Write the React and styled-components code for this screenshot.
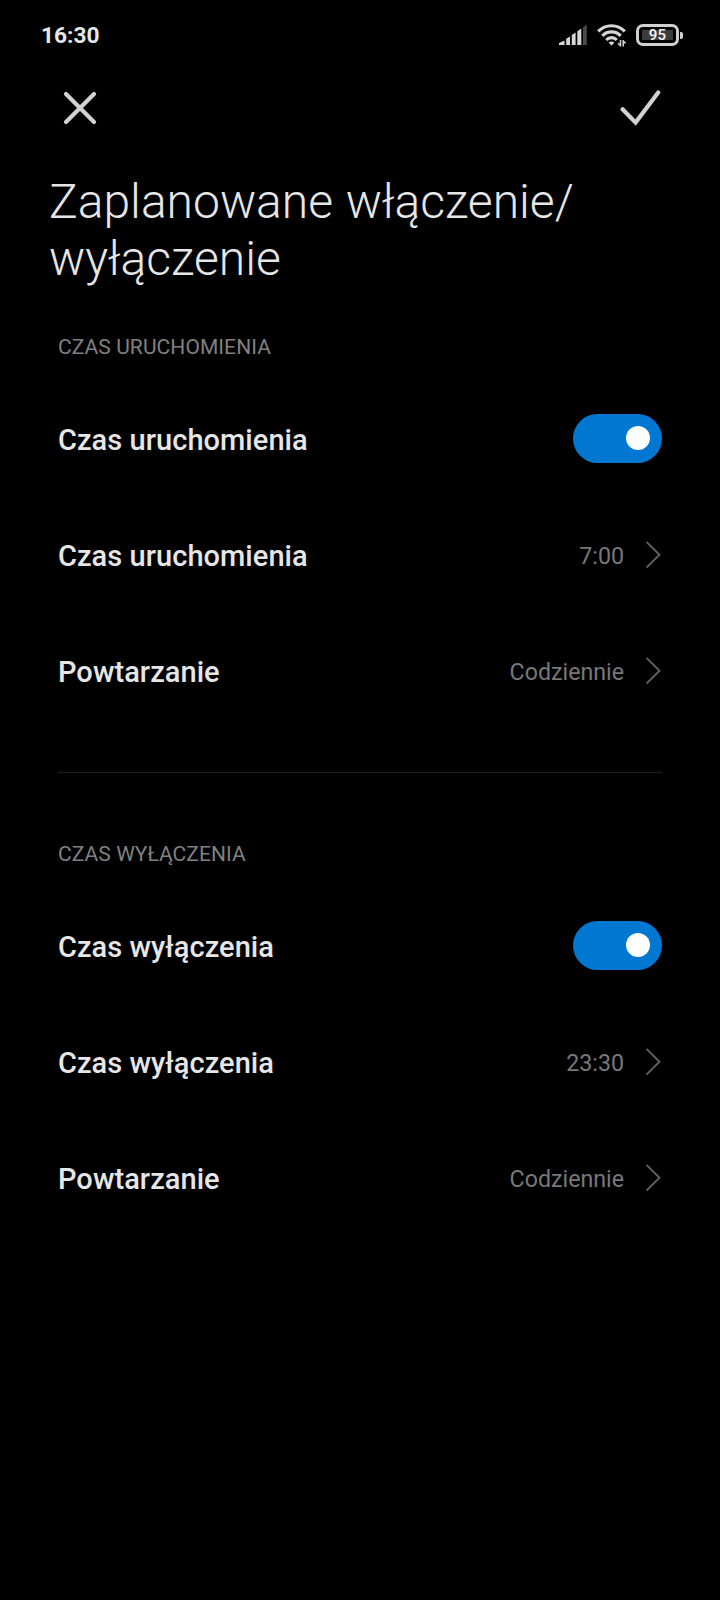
import React from 'react';
import styled, { createGlobalStyle } from 'styled-components';

export default function App() {
  return (
    <Screen>
      <GlobalStyle />
      <StatusBar>
        <Clock>16:30</Clock>
        <StatusIcons>
          <SignalIcon />
          <WifiIcon />
          <Battery level={95} />
        </StatusIcons>
      </StatusBar>
      <ActionBar>
        <IconButton aria-label="Anuluj">
          <CloseIcon />
        </IconButton>
        <IconButton aria-label="Zapisz">
          <CheckIcon />
        </IconButton>
      </ActionBar>
      <Title>
        Zaplanowane włączenie/
        <br />
        wyłączenie
      </Title>
      <Section>
        <SectionTitle>CZAS URUCHOMIENIA</SectionTitle>
        <ToggleRow label="Czas uruchomienia" />
        <LinkRow label="Czas uruchomienia" value="7:00" />
        <LinkRow label="Powtarzanie" value="Codziennie" />
      </Section>
      <Divider />
      <Section>
        <SectionTitle>CZAS WYŁĄCZENIA</SectionTitle>
        <ToggleRow label="Czas wyłączenia" />
        <LinkRow label="Czas wyłączenia" value="23:30" />
        <LinkRow label="Powtarzanie" value="Codziennie" />
      </Section>
    </Screen>
  );
}

function ToggleRow({ label }) {
  const [on, setOn] = React.useState(true);

  return (
    <Row>
      <RowLabel>{label}</RowLabel>
      <Switch role="switch" aria-checked={on} aria-label={label} $on={on} onClick={() => setOn(!on)}>
        <Knob />
      </Switch>
    </Row>
  );
}

function LinkRow({ label, value }) {
  return (
    <Row>
      <RowLabel>{label}</RowLabel>
      <RowValue>{value}</RowValue>
      <Chevron />
    </Row>
  );
}

function Battery({ level }) {
  return (
    <BatteryWrapper>
      <BatteryBody>
        <BatteryFill>{level}</BatteryFill>
      </BatteryBody>
      <BatteryTip />
    </BatteryWrapper>
  );
}

function SignalIcon() {
  return (
    <svg width="28" height="22" viewBox="0 0 28 22" fill="#d6d6d6">
      <path d="M0 21V19L5.5 16.5V21Z" />
      <path d="M7.2 21V14.8L11 12.5V21Z" />
      <path d="M12.8 21V11L16.6 8.5V21Z" />
      <path d="M18.3 21V7.3L22.3 4.6V21Z" />
      <path d="M24 21V3.2L27.8 0.8V21Z" fill="#4a4a4a" />
    </svg>
  );
}

function WifiIcon() {
  return (
    <svg width="30" height="24" viewBox="0 0 30 24" fill="none" stroke="#d6d6d6" strokeWidth="3.1">
      <path d="M1.2 8.4C8.6 0.8 20.4 0.8 27.8 8.4" />
      <path d="M5.3 12.8C10.4 7.6 18.6 7.6 23.7 12.8" />
      <path d="M9.2 17C12.3 13.8 16.7 13.8 19.8 17" />
      <path d="M14.5 22.6L11.6 19.8C13.3 18.2 15.7 18.2 17.4 19.8Z" fill="#d6d6d6" stroke="none" />
      <path d="M23.5 17V23.6M23.6 22.6L21 20.2M26.2 17V23.4M26.1 18L28.6 20.4" strokeWidth="1.5" />
    </svg>
  );
}

function CloseIcon() {
  return (
    <svg width="34" height="34" viewBox="0 0 34 34" fill="none" stroke="#d2d2d2" strokeWidth="4.2" strokeLinecap="round">
      <path d="M3 3L31 31M31 3L3 31" />
    </svg>
  );
}

function CheckIcon() {
  return (
    <svg width="42" height="36" viewBox="0 0 42 36" fill="none" stroke="#d2d2d2" strokeWidth="4.2" strokeLinecap="round">
      <path d="M2.6 19.2L15.6 32.6L38.2 2.4" />
    </svg>
  );
}

function Chevron() {
  return (
    <svg width="16" height="30" viewBox="0 0 16 30" fill="none" stroke="#606060" strokeWidth="1.9">
      <path d="M0.5 3L13.5 15.8L0.5 28.6" />
    </svg>
  );
}

const GlobalStyle = createGlobalStyle`
  body {
    margin: 0;
    background-color: #000;
  }
`;

const Screen = styled.div`
  display: flex;
  flex-direction: column;
  width: 720px;
  height: 1600px;
  overflow: hidden;
  background-color: #000;
  color: #e6e6e6;
  font-family: Roboto, 'Liberation Sans', sans-serif;
`;

const StatusBar = styled.div`
  display: flex;
  align-items: center;
  justify-content: space-between;
  height: 70px;
  padding: 0 37px 0 41px;
`;

const Clock = styled.span`
  font-size: 22.7px;
  font-weight: 700;
  line-height: 27px;
`;

const StatusIcons = styled.div`
  display: flex;
  align-items: center;
  gap: 9.5px;
`;

const BatteryWrapper = styled.div`
  display: flex;
  align-items: center;
  gap: 1px;
`;

const BatteryBody = styled.div`
  box-sizing: border-box;
  width: 43px;
  height: 22px;
  padding: 3px;
  border: 3px solid #d0d0d0;
  border-radius: 7px;
`;

const BatteryFill = styled.div`
  display: flex;
  align-items: center;
  justify-content: center;
  height: 100%;
  background-color: #3c3c3c;
  color: #eee;
  font-size: 15px;
  font-weight: 600;
  letter-spacing: 0.3px;
`;

const BatteryTip = styled.div`
  width: 3px;
  height: 7px;
  border-radius: 0 2px 2px 0;
  background-color: #d0d0d0;
`;

const ActionBar = styled.div`
  display: flex;
  align-items: center;
  justify-content: space-between;
  height: 76px;
  padding: 0 58px 0 63px;
`;

const IconButton = styled.button`
  display: flex;
  padding: 0;
  border: none;
  background: none;
`;

const Title = styled.h1`
  margin: 27px 0 0;
  padding: 0 49px;
  font-size: 48px;
  font-weight: 300;
  line-height: 57px;
  word-spacing: 1px;
`;

const Section = styled.div`
  display: flex;
  flex-direction: column;
  padding: 40px 58px 44px;
`;

const SectionTitle = styled.h2`
  margin: 0 0 13px;
  color: #808080;
  font-size: 21px;
  font-weight: 400;
  line-height: 40px;
  letter-spacing: 0.08px;
`;

const Row = styled.div`
  display: flex;
  align-items: center;
  height: 116px;
`;

const RowLabel = styled.span`
  flex: 1;
  padding-top: 3px;
  font-size: 29px;
  font-weight: 500;
  letter-spacing: 0.05px;
`;

const RowValue = styled.span`
  margin-right: 22px;
  padding-top: 4px;
  color: #787878;
  font-size: 23.2px;
`;

const Switch = styled.button`
  display: flex;
  align-items: center;
  justify-content: ${({ $on }) => ($on ? 'flex-end' : 'flex-start')};
  width: 89px;
  height: 49px;
  padding: 0 12px;
  border: none;
  border-radius: 25px;
  background-color: ${({ $on }) => ($on ? '#0077d0' : '#333')};
`;

const Knob = styled.span`
  width: 24px;
  height: 24px;
  border-radius: 50%;
  background-color: #fff;
`;

const Divider = styled.div`
  height: 1px;
  margin: 0 58px 21px;
  background-color: #202020;
`;
